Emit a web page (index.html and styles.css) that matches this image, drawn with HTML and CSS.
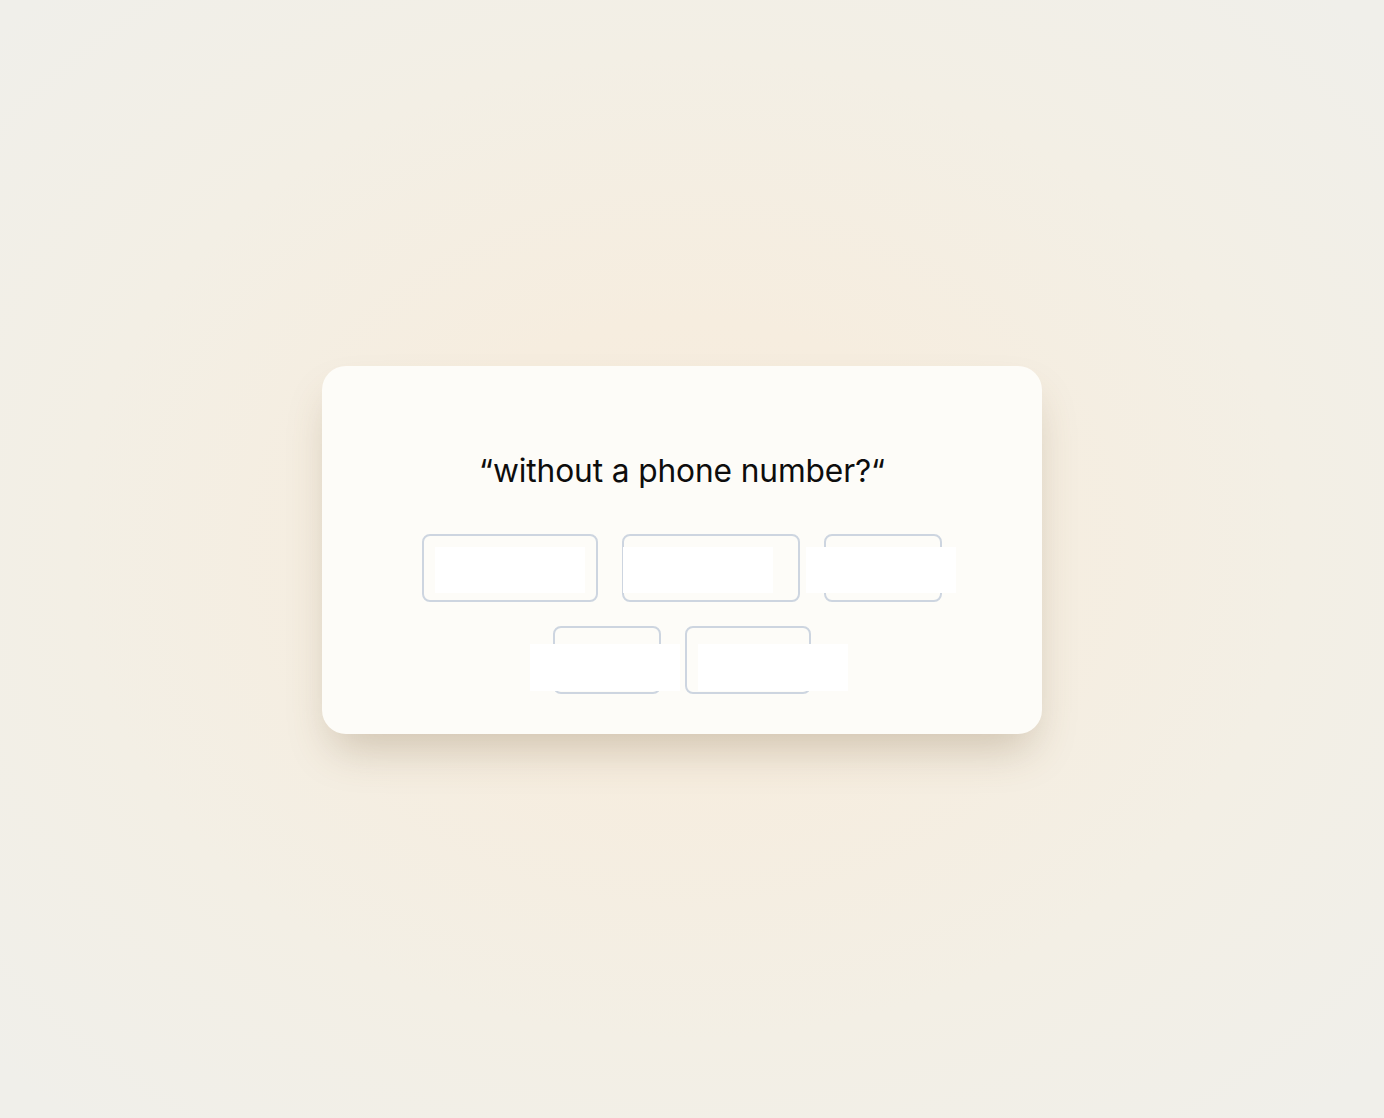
FILE: index.html
```html
<!DOCTYPE html>
<html lang="en">
<head>
<meta charset="utf-8">
<title>Quiz</title>
<link rel="stylesheet" href="styles.css">
</head>
<body>
<main class="stage">
  <section class="card">
    <h1 class="question">“without a phone number?“</h1>
    <div class="options">
      <button class="opt w1"><span class="label l1"></span></button>
      <button class="opt w2"><span class="label l2"></span></button>
      <button class="opt w3"><span class="label l3"></span></button>
      <button class="opt w4"><span class="label l4"></span></button>
      <button class="opt w5"><span class="label l5"></span></button>
    </div>
  </section>
</main>
</body>
</html>
```

FILE: styles.css
```css
html, body {
  margin: 0;
  padding: 0;
  height: 100%;
}
body {
  font-family: Inter, "Noto Sans", sans-serif;
  background: radial-gradient(ellipse 68% 68% at 49.5% 49%, #f7ecdd 0%, #f6eddf 30%, #f3efe5 65%, #f0efea 100%);
  background-color: #f0efea;
}
.stage {
  box-sizing: border-box;
  height: 100%;
  display: flex;
  align-items: center;
  justify-content: center;
  padding: 0 20px 18px 0;
}
.card {
  box-sizing: border-box;
  width: 720px;
  height: 368px;
  background: #fdfcf8;
  border-radius: 24px;
  box-shadow: 0 24px 44px -10px rgba(110, 85, 50, 0.28);
  display: flex;
  flex-direction: column;
  align-items: center;
  padding-top: 85px;
}
.question {
  margin: 0;
  font-size: 31.7px;
  font-weight: 400;
  line-height: 40px;
  color: #0d0d0d;
  letter-spacing: -0.12px;
}
.options {
  margin-top: 43px;
  width: 560px;
  display: flex;
  flex-wrap: wrap;
  justify-content: center;
  gap: 24px;
}
.opt {
  position: relative;
  box-sizing: border-box;
  height: 68px;
  padding: 0;
  background: transparent;
  border: 2px solid #cdd5e0;
  border-radius: 8px;
}
.w1 { width: 176px; }
.w2 { width: 178px; }
.w3 { width: 118px; }
.w4 { width: 108px; }
.w5 { width: 126px; }
.label {
  position: absolute;
  width: 150px;
  height: 46px;
  background: #ffffff;
}
.l1 { left: 11px; top: 11px; }
.l2 { left: -1px; top: 11px; }
.l3 { left: -20px; top: 11px; }
.l4 { left: -25px; top: 16px; height: 47px; }
.l5 { left: 11px; top: 16px; height: 47px; }
```
